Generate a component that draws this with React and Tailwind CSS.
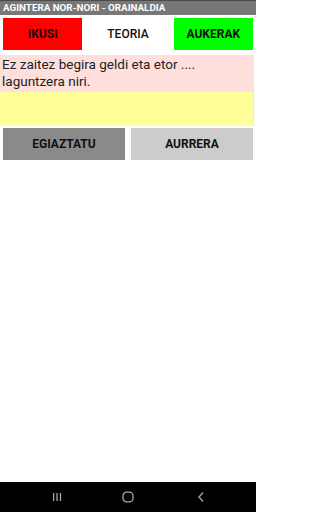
export default function App() {
  return (
    <div className="w-[256px] h-[512px] bg-white flex flex-col overflow-hidden" style={{ fontFamily: "Roboto, 'Liberation Sans', sans-serif" }}>
      <div className="h-[15px] bg-[#777777] border-t border-[#4a4a4a] flex items-center px-[3px]">
        <span className="text-white text-[9.8px] font-bold leading-none">AGINTERA NOR-NORI - ORAINALDIA</span>
      </div>
      <div className="grid grid-cols-3 mt-[3px]">
        <div className="mx-[3px] h-[32px] bg-[#ff0000] flex items-center justify-center text-[12px] font-bold text-[#111]">IKUSI</div>
        <div className="mx-[3px] h-[32px] flex items-center justify-center text-[12px] font-medium text-[#111]">TEORIA</div>
        <div className="mx-[3px] h-[32px] bg-[#00ff00] flex items-center justify-center text-[12px] font-bold text-[#111]">AUKERAK</div>
      </div>
      <div className="mt-[5px] mr-[2px] border-r border-[#e6e6e6]">
        <div className="bg-[#ffdfdb] h-[37px] px-[2px] pt-[1px] text-[13.5px] leading-[17px] text-[#222]">
          Ez zaitez begira geldi eta etor ....<br />laguntzera niri.
        </div>
        <div className="bg-[#ffff99] h-[34px]"></div>
      </div>
      <div className="grid grid-cols-2 mt-[2px]">
        <div className="mx-[3px] h-[32px] bg-[#8a8a8a] flex items-center justify-center text-[12px] font-bold text-[#111]">EGIAZTATU</div>
        <div className="mx-[3px] h-[32px] bg-[#cccccc] flex items-center justify-center text-[12px] font-bold text-[#111]">AURRERA</div>
      </div>
      <div className="flex-1"></div>
      <div className="h-[30px] bg-black flex items-center">
        <div className="w-[52px]"></div>
        <svg width="10" height="10" viewBox="0 0 10 10">
          <rect x="1" y="1" width="1.3" height="8" fill="#a8a8a8" />
          <rect x="4.4" y="1" width="1.3" height="8" fill="#a8a8a8" />
          <rect x="7.8" y="1" width="1.3" height="8" fill="#a8a8a8" />
        </svg>
        <div className="w-[60px]"></div>
        <svg width="12" height="12" viewBox="0 0 12 12">
          <rect x="1" y="1.2" width="10" height="9.6" rx="3.6" fill="none" stroke="#a8a8a8" strokeWidth="1.3" />
        </svg>
        <div className="w-[63px]"></div>
        <svg width="8" height="12" viewBox="0 0 8 12">
          <path d="M6 1.5 L2 6 L6 10.5" fill="none" stroke="#a8a8a8" strokeWidth="1.3" />
        </svg>
      </div>
    </div>
  );
}
